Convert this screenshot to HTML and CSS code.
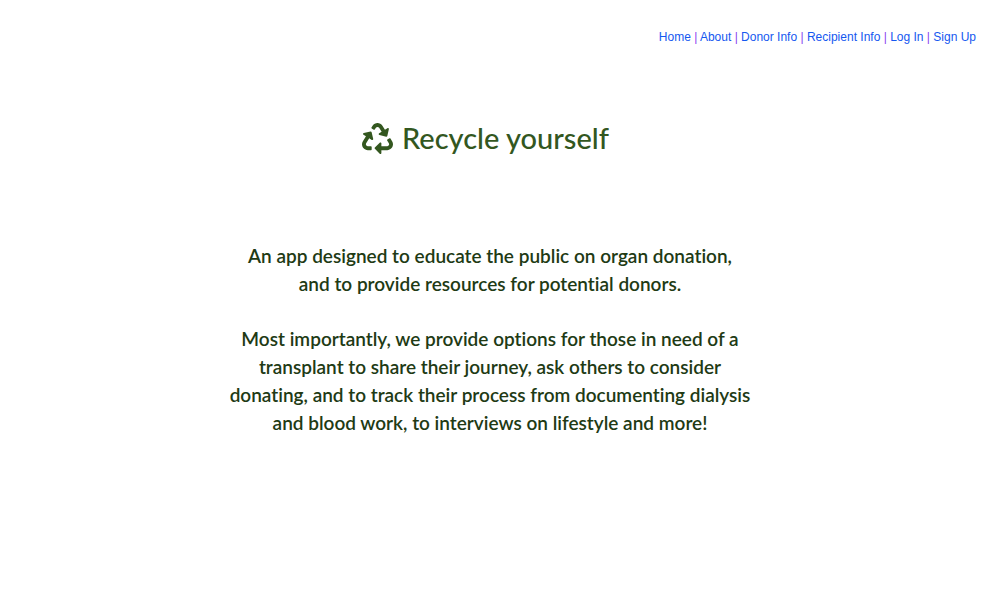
FILE: index.html
```html
<!DOCTYPE html>
<html lang="en">
<head>
<meta charset="utf-8">
<meta name="viewport" content="width=device-width, initial-scale=1">
<title>Recycle yourself</title>
<link rel="stylesheet" href="styles.css">
</head>
<body>
<nav class="nav">
<a href="#">Home</a> |
<a href="#">About</a> |
<a href="#">Donor Info</a> |
<a href="#">Recipient Info</a> |
<a href="#">Log In</a> |
<a href="#">Sign Up</a>
</nav>
<main class="main">
<h1 class="title">
<svg class="logo" viewBox="0 0 512 512" aria-hidden="true"><path fill="currentColor" d="M184.561 261.903c3.232 13.997-12.123 24.635-24.068 17.168l-40.736-25.455-50.867 81.402C55.606 356.273 70.96 384 96.012 384H148c6.627 0 12 5.373 12 12v40c0 6.627-5.373 12-12 12H96.115c-75.334 0-121.302-83.048-81.408-146.88l50.822-81.388-40.725-25.448c-12.081-7.547-8.966-25.961 4.879-29.158l110.237-25.45c8.611-1.988 17.201 3.381 19.189 11.99l25.452 110.237zm98.561-182.915l41.289 66.076-40.74 25.457c-12.051 7.528-9 25.953 4.879 29.158l110.237 25.45c8.672 1.999 17.215-3.438 19.189-11.99l25.45-110.237c3.197-13.844-11.99-24.719-24.068-17.168l-40.687 25.424-41.263-66.082c-37.521-60.033-125.209-60.171-162.816 0l-17.963 28.766c-3.51 5.62-1.8 13.021 3.82 16.533l33.919 21.195c5.62 3.512 13.024 1.803 16.536-3.817l17.961-28.743c12.712-20.341 41.973-19.676 54.257-.022zM497.288 301.12l-27.515-44.065c-3.511-5.623-10.916-7.334-16.538-3.821l-33.861 21.159c-5.62 3.512-7.33 10.915-3.818 16.536l27.564 44.112c13.257 21.211-2.057 48.96-27.136 48.96H320V336.02c0-14.213-17.242-21.383-27.313-11.313l-80 79.981c-6.249 6.248-6.249 16.379 0 22.627l80 79.989C302.689 517.308 320 510.3 320 495.989V448h95.88c75.274 0 121.335-82.997 81.408-146.88z"/></svg>
<span>Recycle yourself</span>
</h1>
<div class="intro">
<p>An app designed to educate the public on organ donation,<br>and to provide resources for potential donors.</p>
<p>Most importantly, we provide options for those in need of a<br>transplant to share their journey, ask others to consider<br>donating, and to track their process from documenting dialysis<br>and blood work, to interviews on lifestyle and more!</p>
</div>
</main>
</body>
</html>
```
FILE: styles.css
```css
body {
  margin: 0;
  background: #fff;
  font-family: Lato, "Open Sans", sans-serif;
  font-variant-ligatures: none;
}

.nav {
  padding: 30px 25px 0;
  text-align: right;
  font: 12px/14px "Liberation Sans", Arial, sans-serif;
  color: #8a3ff0;
}

.nav a {
  color: #1558f0;
  text-decoration: none;
}

.main {
  padding: 74px 24px 24px 0;
  text-align: center;
}

.title {
  display: flex;
  justify-content: center;
  align-items: center;
  gap: 9px;
  margin: 0 0 84px;
  padding-right: 6px;
  font-size: 29px;
  line-height: 40px;
  font-weight: 500;
  color: #33571f;
}

.logo {
  width: 31px;
  height: 31px;
}

.intro {
  padding-left: 3px;
  font-size: 19px;
  line-height: 28px;
  font-weight: 600;
  color: #213a14;
}

.intro p {
  margin: 0 0 27px;
}
```
